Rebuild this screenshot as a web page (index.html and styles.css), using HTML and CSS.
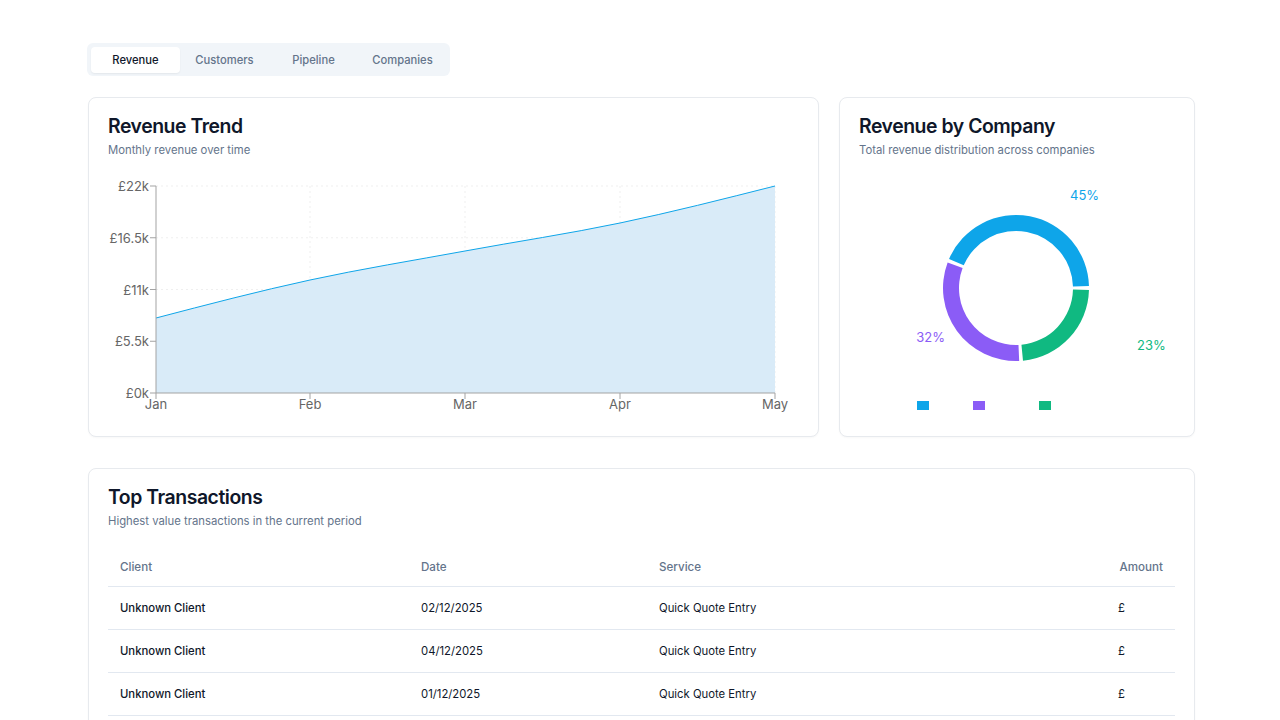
FILE: index.html
```html
<!DOCTYPE html>
<html lang="en">
  <head>
    <meta charset="UTF-8" />
    <meta name="viewport" content="width=device-width, initial-scale=1.0" />
    <title>Revenue</title>

    <link rel="stylesheet" href="styles.css">
  </head>
  <body>
    <div class="page">
      <div class="tabs">
        <div class="tab active">Revenue</div>
        <div class="tab">Customers</div>
        <div class="tab">Pipeline</div>
        <div class="tab">Companies</div>
      </div>

      <div class="charts">
        <div class="card">
          <div class="card-header">
            <h3 class="card-title">Revenue Trend</h3>
            <p class="card-desc">Monthly revenue over time</p>
          </div>
          <svg class="chart" width="691" height="240" viewBox="0 0 691 240">
            <g class="grid">
              <line x1="48" y1="10" x2="667" y2="10" />
              <line x1="48" y1="61.75" x2="667" y2="61.75" />
              <line x1="48" y1="113.5" x2="667" y2="113.5" />
              <line x1="48" y1="165.25" x2="667" y2="165.25" />
              <line x1="202" y1="10" x2="202" y2="217" />
              <line x1="357" y1="10" x2="357" y2="217" />
              <line x1="512" y1="10" x2="512" y2="217" />
              <line x1="667" y1="10" x2="667" y2="217" />
            </g>
            <path class="area" d="M48,142 C99.33,128.56 150.67,115.13 202,104 C253.67,92.8 305.33,84.5 357,75 C408.67,65.5 460.33,57.83 512,47 C563.67,36.17 615.33,23.08 667,10 L667,217 L48,217 Z" />
            <path class="line" d="M48,142 C99.33,128.56 150.67,115.13 202,104 C253.67,92.8 305.33,84.5 357,75 C408.67,65.5 460.33,57.83 512,47 C563.67,36.17 615.33,23.08 667,10" />
            <g class="axis">
              <line x1="48" y1="10" x2="48" y2="217" />
              <line x1="48" y1="217" x2="667" y2="217" />
              <line x1="42" y1="10" x2="48" y2="10" />
              <line x1="42" y1="61.75" x2="48" y2="61.75" />
              <line x1="42" y1="113.5" x2="48" y2="113.5" />
              <line x1="42" y1="165.25" x2="48" y2="165.25" />
              <line x1="42" y1="217" x2="48" y2="217" />
              <line x1="48" y1="217" x2="48" y2="223" />
              <line x1="202" y1="217" x2="202" y2="223" />
              <line x1="357" y1="217" x2="357" y2="223" />
              <line x1="512" y1="217" x2="512" y2="223" />
              <line x1="667" y1="217" x2="667" y2="223" />
            </g>
            <g class="ticks y-ticks">
              <text x="41" y="10">£22k</text>
              <text x="41" y="61.75">£16.5k</text>
              <text x="41" y="113.5">£11k</text>
              <text x="41" y="165.25">£5.5k</text>
              <text x="41" y="217">£0k</text>
            </g>
            <g class="ticks x-ticks">
              <text x="48" y="228">Jan</text>
              <text x="202" y="228">Feb</text>
              <text x="357" y="228">Mar</text>
              <text x="512" y="228">Apr</text>
              <text x="667" y="228">May</text>
            </g>
          </svg>
        </div>

        <div class="card">
          <div class="card-header">
            <h3 class="card-title">Revenue by Company</h3>
            <p class="card-desc">Total revenue distribution across companies</p>
          </div>
          <svg class="chart" width="316" height="240" viewBox="0 0 316 240">
            <path fill="#0ea5e9" d="M229.97,110.09 A73,73 0 0,0 90.05,82.89 L104.73,89.27 A57,57 0 0,1 213.98,110.51 Z" />
            <path fill="#8b5cf6" d="M88.62,86.43 A73,73 0 0,0 160.18,184.93 L159.49,168.95 A57,57 0 0,1 103.61,92.04 Z" />
            <path fill="#10b981" d="M164,184.66 A73,73 0 0,0 229.97,113.91 L213.98,113.49 A57,57 0 0,1 162.46,168.74 Z" />
            <text class="pie-label" x="211" y="19" fill="#0ea5e9">45%</text>
            <text class="pie-label" x="86" y="161" fill="#8b5cf6" text-anchor="end">32%</text>
            <text class="pie-label" x="278" y="169" fill="#10b981">23%</text>
            <rect x="58" y="225" width="12" height="9" fill="#0ea5e9" />
            <rect x="114" y="225" width="12" height="9" fill="#8b5cf6" />
            <rect x="180" y="225" width="12" height="9" fill="#10b981" />
          </svg>
        </div>
      </div>

      <div class="card table-card">
        <div class="card-header">
          <h3 class="card-title">Top Transactions</h3>
          <p class="card-desc">Highest value transactions in the current period</p>
        </div>
        <table class="transactions">
          <thead>
            <tr>
              <th class="col-client">Client</th>
              <th class="col-date">Date</th>
              <th>Service</th>
              <th class="right">Amount</th>
            </tr>
          </thead>
          <tbody>
            <tr>
              <td class="client">Unknown Client</td>
              <td>02/12/2025</td>
              <td>Quick Quote Entry</td>
              <td class="amount">£</td>
            </tr>
            <tr>
              <td class="client">Unknown Client</td>
              <td>04/12/2025</td>
              <td>Quick Quote Entry</td>
              <td class="amount">£</td>
            </tr>
            <tr>
              <td class="client">Unknown Client</td>
              <td>01/12/2025</td>
              <td>Quick Quote Entry</td>
              <td class="amount">£</td>
            </tr>
          </tbody>
        </table>
      </div>
    </div>
  </body>
</html>
```

FILE: styles.css
```css
body {
  margin: 0;
  background: white;
  font-family: Inter, "Noto Sans", sans-serif;
  color: #0f172a;
}

.page {
  width: 1107px;
  margin-left: 88px;
  padding-top: 43px;
}

.tabs {
  display: inline-grid;
  grid-template-columns: repeat(4, 89px);
  padding: 4px 3px 3px 4px;
  background: #f1f5f9;
  border-radius: 6px;
  margin-left: -1px;
}

.tab {
  height: 26px;
  display: flex;
  justify-content: center;
  align-items: center;
  font-size: 11.2px;
  font-weight: 500;
  color: #64748b;
  border-radius: 4px;
}

.tab.active {
  background: white;
  color: #0f172a;
  box-shadow: 0 1px 2px rgba(0, 0, 0, 0.06);
}

.charts {
  display: grid;
  grid-template-columns: 731px 1fr;
  gap: 20px;
  margin-top: 21px;
}

.card {
  border: 1px solid #e7eaee;
  border-radius: 8px;
  background: white;
  box-shadow: 0 1px 2px rgba(0, 0, 0, 0.03);
  padding: 16px 19px 20px 19px;
}

.card-title {
  margin: 0;
  font-size: 19.4px;
  line-height: 24px;
  font-weight: 600;
  letter-spacing: -0.45px;
}

.card-desc {
  margin: 4px 0 0;
  font-size: 11.3px;
  line-height: 16px;
  color: #64748b;
}

.chart {
  display: block;
  margin-top: 18px;
}

.grid line {
  stroke: #efefef;
  stroke-dasharray: 2 3;
}

.area {
  fill: #d9ebf8;
}

.line {
  fill: none;
  stroke: #0ea5e9;
  stroke-width: 1;
}

.axis line {
  stroke: #a3a3a3;
}

.ticks text {
  font-size: 13px;
  fill: #666;
  dominant-baseline: central;
}

.y-ticks text {
  text-anchor: end;
}

.x-ticks text {
  text-anchor: middle;
}

.pie-label {
  font-size: 13px;
  dominant-baseline: central;
}

.table-card {
  margin-top: 31px;
  padding-bottom: 60px;
}

.transactions {
  width: 100%;
  margin-top: 18px;
  border-collapse: collapse;
  font-size: 11.3px;
}

.transactions th {
  height: 39px;
  padding: 0 12px;
  text-align: left;
  font-size: 11.6px;
  font-weight: 500;
  color: #64748b;
  border-bottom: 1px solid #e2e8f0;
}

.transactions td {
  height: 42px;
  padding: 0 12px;
  border-bottom: 1px solid #e2e8f0;
}

.col-client {
  width: 277px;
}

.col-date {
  width: 214px;
}

.transactions .right {
  text-align: right;
}

.client {
  font-weight: 500;
}

.transactions .amount {
  text-align: right;
  padding-right: 50px;
}
```
